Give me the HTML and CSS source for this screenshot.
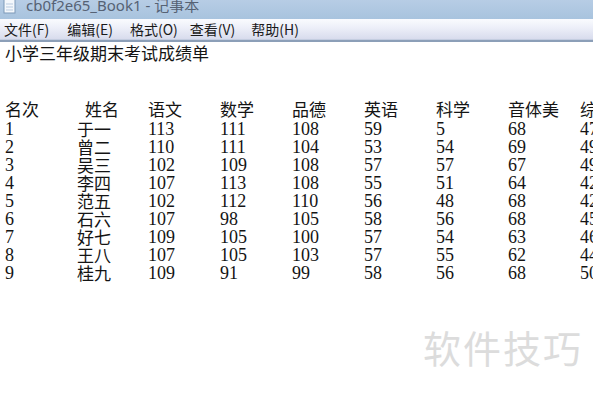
FILE: index.html
```html
<!DOCTYPE html>
<html lang="zh">
<head>
  <meta charset="utf-8">
  <link rel="stylesheet" href="styles.css">
</head>
<body>
  <div class="window">
    <div class="titlebar">
      <svg class="app-icon" width="14" height="14" viewBox="0 0 14 14">
        <rect x="1" y="-2" width="11" height="15" fill="#f4f8fc" stroke="#7d99b8"/>
        <line x1="3" y1="4" x2="10" y2="4" stroke="#b9cbe0"/>
        <line x1="3" y1="7" x2="10" y2="7" stroke="#b9cbe0"/>
        <line x1="3" y1="10" x2="10" y2="10" stroke="#b9cbe0"/>
      </svg>
      <span class="title-text">cb0f2e65_Book1 - 记事本</span>
    </div>
    <div class="menubar">
      <span class="menu-item">文件(F)</span>
      <span class="menu-item">编辑(E)</span>
      <span class="menu-item">格式(O)</span>
      <span class="menu-item">查看(V)</span>
      <span class="menu-item">帮助(H)</span>
    </div>

    <div class="doc">
      <div class="doc-title">小学三年级期末考试成绩单</div>

      <div class="grid head">
        <span>名次</span><span class="name-head">姓名</span><span>语文</span><span>数学</span><span>品德</span><span>英语</span><span>科学</span><span>音体美</span><span>综</span>
      </div>
      <div class="grid"><span>1</span><span>于一</span><span>113</span><span>111</span><span>108</span><span>59</span><span>5</span><span>68</span><span>47</span></div>
      <div class="grid"><span>2</span><span>曾二</span><span>110</span><span>111</span><span>104</span><span>53</span><span>54</span><span>69</span><span>49</span></div>
      <div class="grid"><span>3</span><span>吴三</span><span>102</span><span>109</span><span>108</span><span>57</span><span>57</span><span>67</span><span>49</span></div>
      <div class="grid"><span>4</span><span>李四</span><span>107</span><span>113</span><span>108</span><span>55</span><span>51</span><span>64</span><span>42</span></div>
      <div class="grid"><span>5</span><span>范五</span><span>102</span><span>112</span><span>110</span><span>56</span><span>48</span><span>68</span><span>42</span></div>
      <div class="grid"><span>6</span><span>石六</span><span>107</span><span>98</span><span>105</span><span>58</span><span>56</span><span>68</span><span>45</span></div>
      <div class="grid"><span>7</span><span>好七</span><span>109</span><span>105</span><span>100</span><span>57</span><span>54</span><span>63</span><span>46</span></div>
      <div class="grid"><span>8</span><span>王八</span><span>107</span><span>105</span><span>103</span><span>57</span><span>55</span><span>62</span><span>44</span></div>
      <div class="grid"><span>9</span><span>桂九</span><span>109</span><span>91</span><span>99</span><span>58</span><span>56</span><span>68</span><span>50</span></div>
    </div>
  </div>

  <div class="watermark">软件技巧</div>
</body>
</html>
```

FILE: styles.css
```css
html, body {
  margin: 0;
  width: 600px;
  height: 400px;
  overflow: hidden;
  background: #ffffff;
}

body {
  position: relative;
  font-family: "Liberation Serif", "Noto Sans CJK SC", serif;
}

.window {
  width: 593px;
  overflow: hidden;
}

.titlebar {
  height: 19px;
  display: flex;
  align-items: flex-start;
  gap: 9px;
  padding-left: 3px;
  background: linear-gradient(#b7cde5, #a8c3de);
  overflow: hidden;
}

.app-icon {
  flex: none;
}

.title-text {
  font-family: "Noto Sans", "Noto Sans CJK SC", sans-serif;
  font-size: 15px;
  line-height: 15px;
  margin-top: -2px;
  color: #566274;
}

.menubar {
  height: 20px;
  display: flex;
  align-items: center;
  padding-left: 4px;
  background: linear-gradient(#fafbfe, #eef0f9 40%, #d8dced);
  border-bottom: 1px solid #c4cde0;
  box-shadow: 0 2px 0 #8c9fb8;
  font-family: "Noto Sans CJK SC", sans-serif;
  font-size: 14px;
  color: #1a1a1a;
}

.menu-item {
  margin-right: 18px;
  line-height: 20px;
}

.menu-item:nth-child(2) { margin-right: 17px; }
.menu-item:nth-child(3) { margin-right: 12px; }
.menu-item:nth-child(4) { margin-right: 16px; }

.doc {
  padding: 4px 0 0 5px;
  font-size: 18px;
  line-height: 18px;
  color: #141414;
}

.doc-title {
  font-family: "Noto Sans CJK SC", sans-serif;
  font-size: 17px;
  line-height: 18px;
  margin-bottom: 38px;
}

.grid {
  display: grid;
  grid-template-columns: 72px 71px repeat(7, 72px);
  height: 18px;
  white-space: nowrap;
}

.grid span {
  line-height: 18px;
  height: 18px;
}

.grid span:nth-child(2) {
  font-family: "Noto Sans CJK SC", sans-serif;
  font-size: 17px;
}

.head {
  font-family: "Noto Sans CJK SC", sans-serif;
  font-size: 17px;
  margin-bottom: 2px;
}

.name-head {
  padding-left: 8px;
}

.watermark {
  position: absolute;
  left: 423px;
  top: 325px;
  font-family: "Noto Sans CJK SC", sans-serif;
  font-size: 38px;
  line-height: 44px;
  letter-spacing: 2px;
  color: #dcdcdc;
}
```
